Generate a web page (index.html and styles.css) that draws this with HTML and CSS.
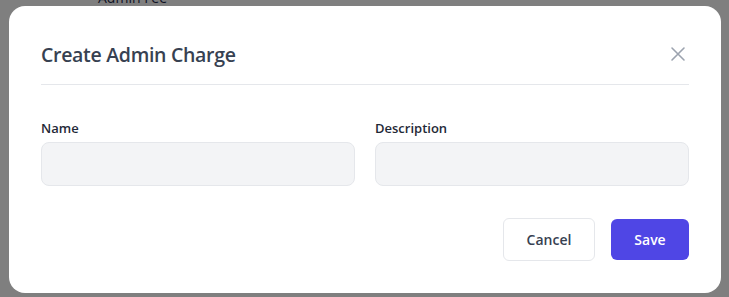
FILE: index.html
```html
<!DOCTYPE html>
<html lang="en">
<head>
    <meta charset="UTF-8">
    <meta name="viewport" content="width=device-width, initial-scale=1.0">
    <title>Create Admin Charge</title>
    <link rel="stylesheet" href="styles.css">
</head>
<body>

<div class="page">
    <p class="page-row">Admin Fee</p>
</div>

<div class="overlay">
    <div class="modal">
        <div class="modal-header">
            <h2>Create Admin Charge</h2>
            <button class="close-btn" aria-label="Close">
                <svg width="16" height="16" viewBox="0 0 16 16" fill="none" stroke="#9ca3af" stroke-width="1.6" stroke-linecap="round">
                    <path d="M2 2 L14 14 M14 2 L2 14"/>
                </svg>
            </button>
        </div>

        <div class="form-grid">
            <div class="field">
                <label for="charge-name">Name</label>
                <input type="text" id="charge-name">
            </div>
            <div class="field">
                <label for="charge-desc">Description</label>
                <input type="text" id="charge-desc">
            </div>
        </div>

        <div class="modal-actions">
            <button class="btn btn-cancel">Cancel</button>
            <button class="btn btn-save">Save</button>
        </div>
    </div>
</div>

</body>
</html>
```

FILE: styles.css
```css
body {
    font-family: "Open Sans", "Noto Sans", sans-serif;
    background-color: #ffffff;
    margin: 0;
    padding: 0;
}
.page {
    padding-left: 98px;
    padding-top: 1px;
}
.page-row {
    margin: -13px 0 0;
    font-size: 14px;
    line-height: 20px;
    color: #1e2a4a;
}
.overlay {
    position: fixed;
    inset: 0;
    background: rgba(0, 0, 0, 0.5);
    padding: 6px 0 0 9px;
}
.modal {
    width: 712px;
    box-sizing: border-box;
    background: #fff;
    border-radius: 16px;
    padding: 34px 32px 32px;
}
.modal-header {
    display: flex;
    align-items: center;
    justify-content: space-between;
    padding-bottom: 14px;
    border-bottom: 1px solid #e5e7eb;
}
.modal-header h2 {
    margin: 0;
    font-size: 19.5px;
    font-weight: 600;
    letter-spacing: -0.3px;
    color: #374151;
    line-height: 30px;
}
.close-btn {
    background: none;
    border: none;
    padding: 0;
    margin-right: 3px;
    margin-bottom: 3px;
    display: flex;
    cursor: pointer;
}
.form-grid {
    display: grid;
    grid-template-columns: 1fr 1fr;
    gap: 20px;
    margin-top: 34px;
}
.field label {
    display: block;
    font-size: 13px;
    font-weight: 600;
    color: #1f2937;
    line-height: 18px;
    margin-bottom: 5px;
}
.field input {
    width: 100%;
    box-sizing: border-box;
    height: 44px;
    background: #f3f4f6;
    border: 1px solid #e5e7eb;
    border-radius: 8px;
}
.modal-actions {
    display: flex;
    justify-content: flex-end;
    gap: 16px;
    margin-top: 32px;
}
.btn {
    font-family: inherit;
    font-size: 14px;
    font-weight: 600;
    height: 43px;
    border-radius: 6px;
    cursor: pointer;
}
.btn-cancel {
    width: 92px;
    background: #fff;
    color: #374151;
    border: 1px solid #e5e7eb;
}
.btn-save {
    width: 78px;
    background: #4f46e5;
    color: #fff;
    border: none;
    height: 41px;
    margin-top: 1px;
}
```
